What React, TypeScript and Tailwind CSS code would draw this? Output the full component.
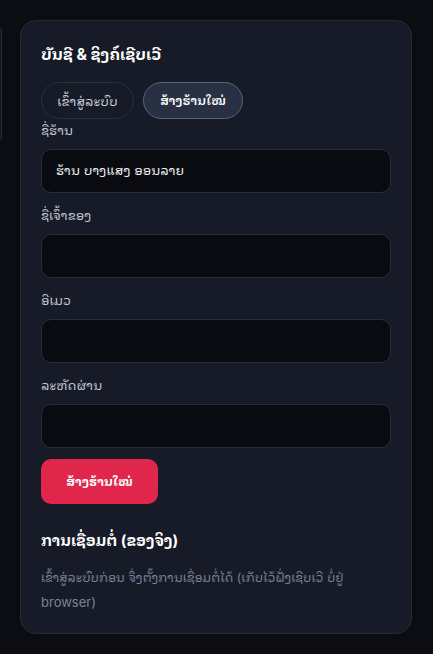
import React from "react";

const font = "Inter, 'Noto Sans Lao Looped', 'Noto Sans Lao', 'Noto Sans', 'DejaVu Sans', sans-serif";

export default function App() {
  return (
    <div className="min-h-[654px] w-[433px] bg-[#0b0d13] text-white" style={{ fontFamily: font }}>
      <div className="flex items-start gap-[18px] pt-5">
        <div className="mt-2 h-[112px] w-[2px] shrink-0 rounded-r-2xl border-y border-r border-[#222837] bg-[#141925]" />
        <div className="w-[392px] rounded-2xl border border-[#232a38] bg-[#161b27] px-5 pt-[21px] pb-[18px]">
          <h2 className="h-[26px] text-[15.5px] font-bold leading-[26px] text-white">ບັນຊີ &amp; ຊິງຄ໌ເຊີບເວີ</h2>
          <div className="mt-[14px] flex gap-[9px]">
            <button className="h-[37px] w-[93px] rounded-full border border-[#283042] bg-[#161b27] text-[13px] leading-[20px] text-[#c9cfdb]">
              ເຂົ້າສູ່ລະບົບ
            </button>
            <button className="h-[37px] w-[100px] rounded-full border border-[#5b6478] bg-[#283044] text-[12.5px] font-semibold leading-[20px] text-white">
              ສ້າງຮ້ານໃໝ່
            </button>
          </div>
          <div className="flex flex-col">
            <label className="block h-[22px] text-[13px] leading-[22px] text-[#c3c9d5]">ຊື່ຮ້ານ</label>
            <div className="mt-[8px] flex h-[44px] items-center rounded-[10px] border border-[#262d3c] bg-[#0a0b10] px-[14px] text-[13px] text-[#f1f3f7]">
              ຮ້ານ ບາງແສງ ອອນລາຍ
            </div>
            <label className="mt-[11px] block h-[22px] text-[13px] leading-[22px] text-[#c3c9d5]">ຊື່ເຈົ້າຂອງ</label>
            <div className="mt-[8px] h-[44px] rounded-[10px] border border-[#262d3c] bg-[#0a0b10]" />
            <label className="mt-[11px] block h-[22px] text-[13px] leading-[22px] text-[#c3c9d5]">ອີເມວ</label>
            <div className="mt-[8px] h-[44px] rounded-[10px] border border-[#262d3c] bg-[#0a0b10]" />
            <label className="mt-[11px] block h-[22px] text-[13px] leading-[22px] text-[#c3c9d5]">ລະຫັດຜ່ານ</label>
            <div className="mt-[8px] h-[44px] rounded-[10px] border border-[#262d3c] bg-[#0a0b10]" />
          </div>
          <button className="mt-[11px] h-[45px] w-[117px] rounded-[10px] bg-[#e0264a] text-[12.5px] font-bold leading-[20px] text-white">
            ສ້າງຮ້ານໃໝ່
          </button>
          <h3 className="mt-[24px] h-[26px] text-[15px] font-bold leading-[26px] text-white">ການເຊື່ອມຕໍ່ (ຂອງຈິງ)</h3>
          <p className="mt-[11px] h-[50px] text-[12.5px] leading-[25px] text-[#7a8398]">
            ເຂົ້າສູ່ລະບົບກ່ອນ ຈຶ່ງຕັ້ງການເຊື່ອມຕໍ່ໄດ້ (ເກັບໄວ້ຝັ່ງເຊີບເວີ ບໍ່ຢູ່ <span className="text-[13px]">browser)</span>
          </p>
        </div>
      </div>
    </div>
  );
}
